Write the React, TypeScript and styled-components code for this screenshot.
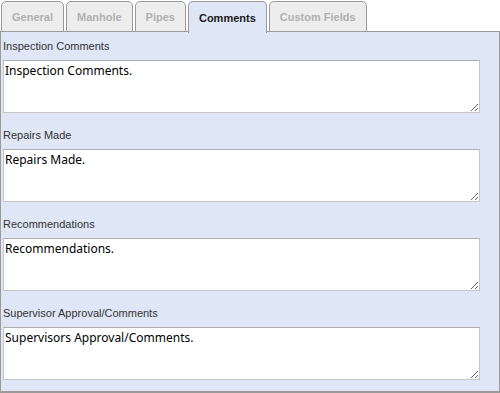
import styled, { createGlobalStyle } from "styled-components";

const GlobalStyle = createGlobalStyle`
  html, body {
    margin: 0;
    padding: 0;
    background: #ffffff;
    font-family: "Liberation Sans", Arial, sans-serif;
  }
`;

const Page = styled.div`
  width: 500px;
  height: 393px;
  display: flex;
  flex-direction: column;
  box-sizing: border-box;
`;

const TabBar = styled.div`
  display: flex;
  gap: 2px;
  padding-left: 1px;
  padding-top: 1px;
  height: 32px;
  box-sizing: border-box;
  position: relative;
  z-index: 1;
`;

const Tab = styled.div<{ $active?: boolean }>`
  height: ${(p) => (p.$active ? "32px" : "31px")};
  padding: 0 10px;
  display: flex;
  align-items: center;
  justify-content: center;
  border: 1px solid #9a9a9a;
  border-bottom: ${(p) => (p.$active ? "none" : "1px solid #9a9a9a")};
  border-radius: 5px 5px 0 0;
  background: ${(p) => (p.$active ? "#dfe6f5" : "#ededed")};
  color: ${(p) => (p.$active ? "#1a1a1a" : "#b0b0b0")};
  font-weight: bold;
  font-size: 11px;
  box-sizing: border-box;
  cursor: pointer;
`;

const Panel = styled.div`
  flex: 1;
  margin-top: -1px;
  width: 500px;
  box-sizing: border-box;
  background: #dfe6f5;
  border: 1px solid #9a9a9a;
  border-bottom-width: 2px;
  padding: 0 2px;
`;

const Field = styled.div`
  display: flex;
  flex-direction: column;
  margin-bottom: 8px;
`;

const Label = styled.div`
  height: 28px;
  display: flex;
  align-items: center;
  font-size: 11px;
  color: #333333;
`;

const TextArea = styled.textarea`
  width: 477px;
  height: 53px;
  box-sizing: border-box;
  border: 1px solid #c6c6c6;
  border-top-color: #aeaeae;
  background: #ffffff;
  padding: 2px 1px;
  margin: 0;
  font-family: "Noto Sans", "Open Sans", sans-serif;
  font-size: 12px;
  line-height: 16px;
  color: #000000;
  outline: none;
  resize: both;
  display: block;
`;

const tabs = ["General", "Manhole", "Pipes", "Comments", "Custom Fields"];

const fields = [
  { label: "Inspection Comments", value: "Inspection Comments." },
  { label: "Repairs Made", value: "Repairs Made." },
  { label: "Recommendations", value: "Recommendations." },
  { label: "Supervisor Approval/Comments", value: "Supervisors Approval/Comments." },
];

export default function App() {
  return (
    <Page>
      <GlobalStyle />
      <TabBar>
        {tabs.map((t) => (
          <Tab key={t} $active={t === "Comments"}>
            {t}
          </Tab>
        ))}
      </TabBar>
      <Panel>
        {fields.map((f) => (
          <Field key={f.label}>
            <Label>{f.label}</Label>
            <TextArea defaultValue={f.value} />
          </Field>
        ))}
      </Panel>
    </Page>
  );
}
